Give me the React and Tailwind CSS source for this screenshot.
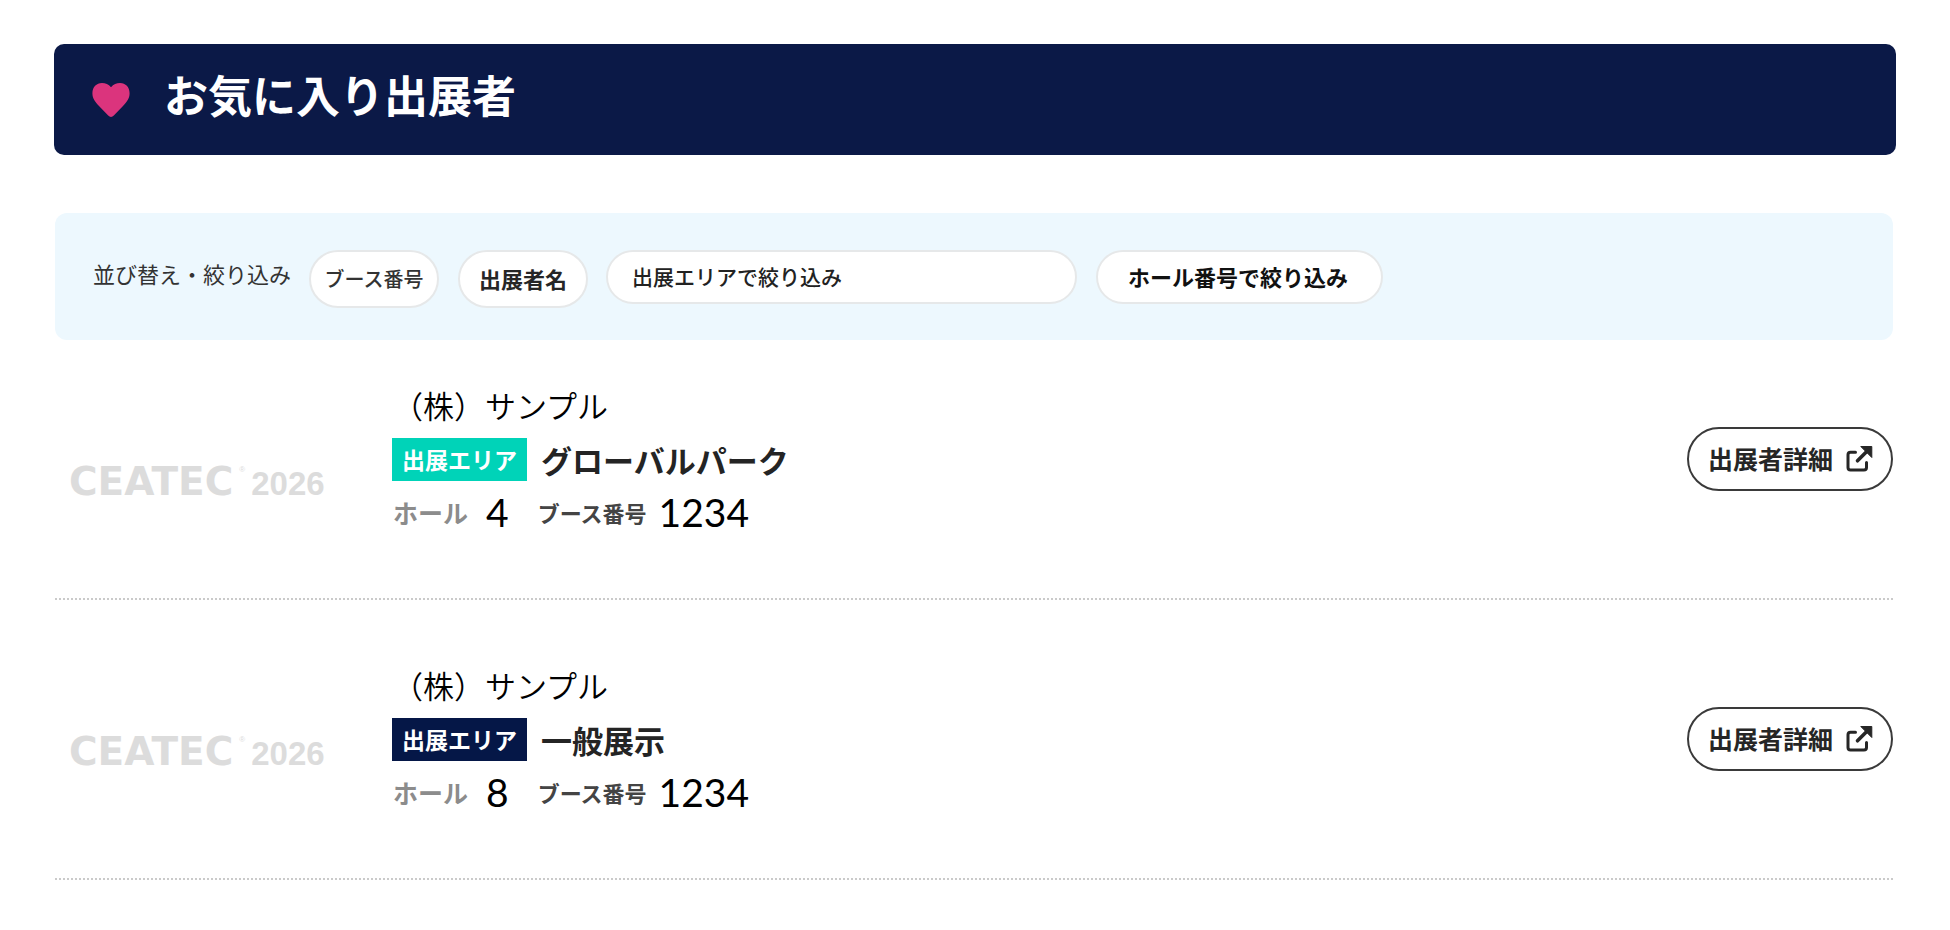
import React from 'react';

const exhibitors = [
  {
    id: 1,
    name: '（株）サンプル',
    area: 'グローバルパーク',
    tagClass: 'bg-[#00d3b8]',
    hall: '4',
    booth: '1234',
  },
  {
    id: 2,
    name: '（株）サンプル',
    area: '一般展示',
    tagClass: 'bg-[#051747]',
    hall: '8',
    booth: '1234',
  },
];

function HeartIcon() {
  return (
    <svg className="h-[34px] w-[38px] shrink-0" viewBox="0 0 38 34" fill="#db347d" aria-hidden="true">
      <path d="M19 4.2C21.4 1 24.6 0 28 0C33.6 0 37.6 4.2 37.6 10.2C37.6 15.4 34.8 19 31 23L21.8 32.6C20.2 34.3 17.8 34.3 16.2 32.6L7 23C3.2 19 .4 15.4 .4 10.2C.4 4.2 4.4 0 10 0C13.4 0 16.6 1 19 4.2Z" />
    </svg>
  );
}

function ExternalIcon() {
  return (
    <svg className="h-[26px] w-[27px] shrink-0" viewBox="0 0 27 26" fill="none" aria-hidden="true">
      <path
        d="M9.5 6.2H4.5Q2 6.2 2 8.7V21.5Q2 24 4.5 24H18Q20.5 24 20.5 21.5V16.5"
        stroke="#262626"
        strokeWidth="3"
        strokeLinecap="round"
      />
      <path d="M11.5 14.8L21 5.3" stroke="#262626" strokeWidth="3.6" strokeLinecap="round" />
      <path d="M14.8 .5H25.8V11.5Z" fill="#262626" stroke="#262626" strokeWidth="1" strokeLinejoin="round" />
    </svg>
  );
}

function Logo() {
  return (
    <div className="flex items-baseline leading-8 whitespace-nowrap text-[#dcdcdc]">
      <span className="font-['DejaVu_Sans',sans-serif] text-[39px] font-bold">CEATEC</span>
      <sup className="mr-[6px] ml-[6px] self-start font-['Liberation_Sans',sans-serif] text-[8px] leading-4">®</sup>
      <span className="font-['Liberation_Sans',sans-serif] text-[33px] font-bold">2026</span>
    </div>
  );
}

function ExhibitorRow({ item }) {
  return (
    <li className="group flex items-center border-b-2 border-dotted border-[#cacaca] pt-[63px] pb-16 first:pt-[43px]">
      <div className="w-[337px] shrink-0 pt-[28px] pl-[14px] group-first:pt-[48px]">
        <Logo />
      </div>
      <div className="flex grow flex-col">
        <h2 className="text-[31px] leading-[44px] font-[350] text-black">{item.name}</h2>
        <div className="mt-[11px] mb-[9px] flex items-center gap-[14px]">
          <span className={`px-[10px] text-[23px] leading-[43px] font-bold text-white ${item.tagClass}`}>
            出展エリア
          </span>
          <span className="text-[31px] leading-10 font-bold text-[#242424]">{item.area}</span>
        </div>
        <dl className="flex items-center leading-[44px]">
          <dt className="pl-px text-[25px] font-bold text-[#8c8c8c]">ホール</dt>
          <dd className="pl-[18px] font-[Lato,sans-serif] text-[39px] text-black">{item.hall}</dd>
          <dt className="pl-[29px] text-[22px] font-bold text-[#444]">ブース番号</dt>
          <dd className="pl-3 font-[Lato,sans-serif] text-[39px] text-black">{item.booth}</dd>
        </dl>
      </div>
      <a
        href="#detail"
        className="flex h-16 shrink-0 items-center gap-[13px] rounded-full border-2 border-[#3a3a3a] pr-[18px] pl-[19px] text-[25px] font-bold whitespace-nowrap text-[#262626]"
      >
        出展者詳細
        <ExternalIcon />
      </a>
    </li>
  );
}

export default function App() {
  return (
    <main className="bg-white px-[54px] pt-11 pb-12 font-['Noto_Sans_CJK_JP',sans-serif]">
      <header className="flex items-center gap-[34px] rounded-[10px] bg-[#0b1947] px-[38px] pt-[18px] pb-7">
        <div className="pt-[10px]">
          <HeartIcon />
        </div>
        <h1 className="text-[44px] leading-[65px] font-bold text-white">お気に入り出展者</h1>
      </header>

      <div className="pr-[3px] pl-px">
        <form className="mt-[58px] flex items-center rounded-xl bg-[#edf8fe] pt-[37px] pb-8 pl-[38px]">
          <span className="pb-3 text-[22px] leading-8 text-[#333]">並び替え・絞り込み</span>
          <button
            type="button"
            className="ml-[18px] h-[58px] w-[130px] rounded-full border-2 border-[#e6e8e9] bg-white text-[20px] font-medium whitespace-nowrap text-[#333]"
          >
            ブース番号
          </button>
          <button
            type="button"
            className="ml-[19px] h-[58px] w-[130px] rounded-full border-2 border-[#e6e8e9] bg-white pb-[2px] text-[22px] font-bold whitespace-nowrap text-[#262626]"
          >
            出展者名
          </button>
          <select
            aria-label="出展エリアで絞り込み"
            className="mr-[19px] mb-1 ml-[18px] h-[54px] w-[471px] appearance-none rounded-full border-2 border-[#e6e8e9] bg-white pl-6 text-[21px] font-medium text-[#222]"
          >
            <option>出展エリアで絞り込み</option>
          </select>
          <select
            aria-label="ホール番号で絞り込み"
            className="mb-1 h-[54px] w-[287px] appearance-none rounded-full border-2 border-[#e6e8e9] bg-white pb-[2px] pl-[30px] text-[22px] font-bold text-[#111]"
          >
            <option>ホール番号で絞り込み</option>
          </select>
        </form>

        <ul>
          {exhibitors.map((item) => (
            <ExhibitorRow key={item.id} item={item} />
          ))}
        </ul>
      </div>
    </main>
  );
}
